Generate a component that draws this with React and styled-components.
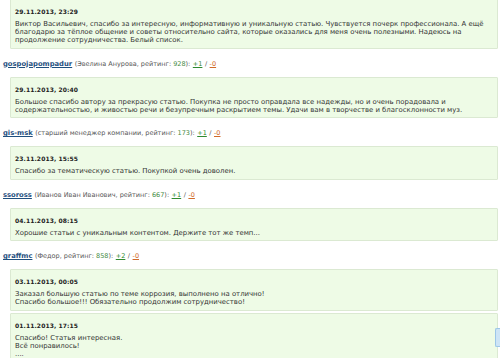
import styled, { createGlobalStyle } from "styled-components";

const GlobalStyle = createGlobalStyle`
  html, body {
    margin: 0;
    padding: 0;
    background: #ffffff;
    overflow: hidden;
  }
  body {
    font-family: "DejaVu Sans", Verdana, sans-serif;
  }
`;

const comments = [
  {
    user: null,
    date: "29.11.2013, 23:29",
    lines: [
      "Виктор Васильевич, спасибо за интересную, информативную и уникальную статью. Чувствуется почерк профессионала. А ещё",
      "благодарю за тёплое общение и советы относительно сайта, которые оказались для меня очень полезными. Надеюсь на",
      "продолжение сотрудничества. Белый список.",
    ],
  },
  {
    user: { login: "gospojapompadur", name: "Эвелина Анурова", rating: 928, plus: "+1", minus: "-0" },
    date: "29.11.2013, 20:40",
    lines: [
      "Большое спасибо автору за прекрасую статью. Покупка не просто оправдала все надежды, но и очень порадовала и",
      "содержательностью, и живостью речи и безупречным раскрытием темы. Удачи вам в творчестве и благосклонности муз.",
    ],
  },
  {
    user: { login: "gis-msk", name: "старший менеджер компании", rating: 173, plus: "+1", minus: "-0" },
    date: "23.11.2013, 15:55",
    lines: ["Спасибо за тематическую статью. Покупкой очень доволен."],
  },
  {
    user: { login: "ssoross", name: "Иванов Иван Иванович", rating: 667, plus: "+1", minus: "-0" },
    date: "04.11.2013, 08:15",
    lines: ["Хорошие статьи с уникальным контентом. Держите тот же темп..."],
  },
  {
    user: { login: "graffmc", name: "Федор", rating: 858, plus: "+2", minus: "-0" },
    date: "03.11.2013, 00:05",
    lines: [
      "Заказал большую статью по теме коррозия, выполнено на отлично!",
      "Спасибо большое!!! Обязательно продолжим сотрудничество!",
    ],
  },
  {
    user: null,
    date: "01.11.2013, 17:15",
    lines: ["Спасибо! Статья интересная.", "Всё понравилось!", "...."],
    tab: true,
    tight: true,
  },
];

const Page = styled.div`
  display: flex;
  flex-direction: column;
  margin-top: -1px;
  padding: 0 2px 0 3px;
  width: 500px;
  box-sizing: border-box;
`;

const UserRow = styled.div`
  display: flex;
  align-items: center;
  gap: 2.5px;
  height: 9px;
  margin: 11px 0 8px 0;
  font-size: 6.5px;
  line-height: 9px;
  color: #555555;
  white-space: nowrap;
`;

const Login = styled.a`
  color: #1f4f7e;
  font-weight: bold;
  font-size: 6.8px;
  text-decoration: underline;
`;

const Rating = styled.span`
  color: #3f8a3f;
`;

const Vote = styled.a`
  color: ${(p) => (p.$down ? "#d06a2a" : "#2f8a2f")};
  text-decoration: underline;
`;

const Box = styled.div`
  position: relative;
  margin-left: 7px;
  margin-top: ${(p) => (p.$tight ? "2px" : "0")};
  padding: 7px 4px 3.5px 4px;
  background: #eefbe6;
  border: 1px solid #dbe9d2;
  border-radius: 1px;
`;

const DateLine = styled.div`
  font-size: 6px;
  line-height: 9px;
  font-weight: bold;
  color: #222222;
  margin-bottom: 4px;
  letter-spacing: 0.1px;
`;

const Text = styled.div`
  font-size: 6.9px;
  line-height: 8px;
  color: #333333;
  white-space: nowrap;
`;

const SideTab = styled.div`
  position: absolute;
  right: -3px;
  top: 14px;
  width: 4px;
  height: 17px;
  background: #cde4f6;
  border: 1px solid #9cc6e8;
  border-right: none;
  border-radius: 2px 0 0 2px;
`;

const Header = ({ user }) => (
  <UserRow>
    <Login>{user.login}</Login>
    <span>
      ({user.name}, рейтинг: <Rating>{user.rating}</Rating>):
    </span>
    <Vote>{user.plus}</Vote>
    <span>/</span>
    <Vote $down>{user.minus}</Vote>
  </UserRow>
);

export default function App() {
  return (
    <>
      <GlobalStyle />
      <Page>
        {comments.map((c, i) => (
          <div key={i}>
            {c.user && <Header user={c.user} />}
            <Box $tight={c.tight}>
              <DateLine>{c.date}</DateLine>
              {c.lines.map((l, j) => (
                <Text key={j}>{l}</Text>
              ))}
              {c.tab && <SideTab />}
            </Box>
          </div>
        ))}
      </Page>
    </>
  );
}
